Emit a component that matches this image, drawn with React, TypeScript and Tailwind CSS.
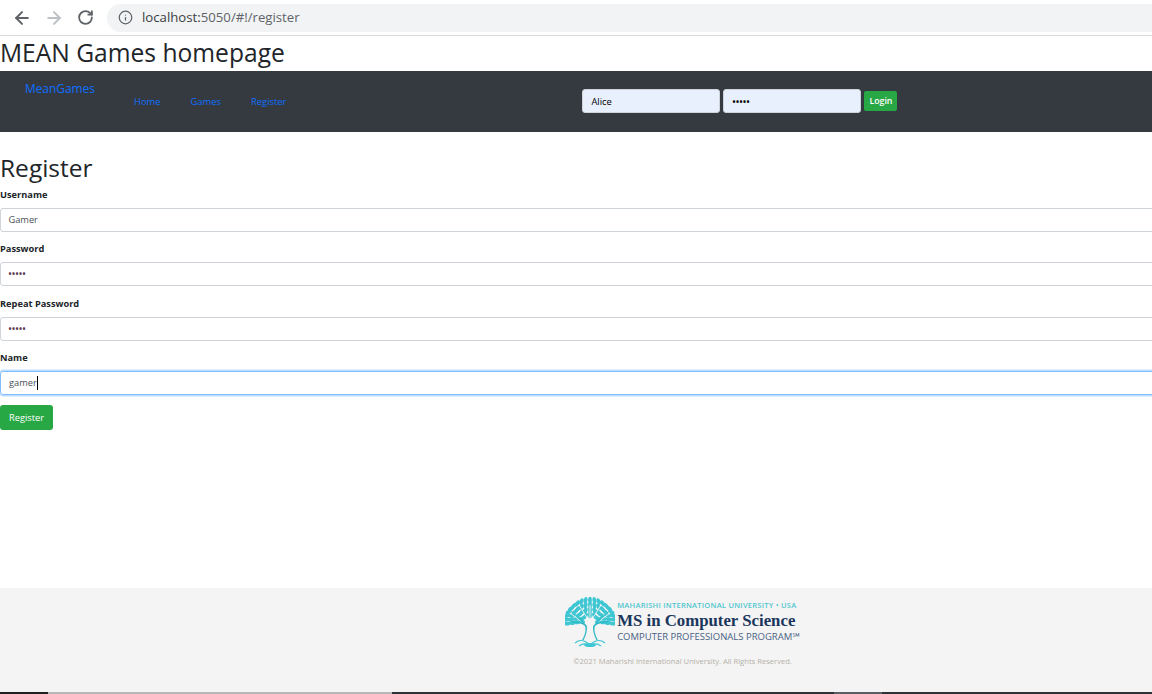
import { ArrowLeft, ArrowRight, RotateCw, Info } from "lucide-react";

const font = "font-['Open_Sans','Noto_Sans',sans-serif]";

function Field({ label, value, type = "text", focused = false }: { label: string; value: string; type?: string; focused?: boolean }) {
  return (
    <div className="mb-[9.6px]">
      <div className="h-[16px] text-[9.25px] leading-[16px] font-bold text-[#212529] mb-[4.9px]">{label}</div>
      <div
        className={
          focused
            ? "h-[24px] w-[1160px] rounded-[3px] border border-[#80bdff] shadow-[0_0_0_1.5px_#bfdeff] pl-[8px] flex items-center text-[9.25px] text-[#495057]"
            : "h-[24px] w-[1160px] rounded-[3px] border-[1.5px] border-[#ced4da] pl-[7.5px] flex items-center text-[9.25px] text-[#495057]"
        }
      >
        {type === "password" ? <span className="tracking-[0.5px] text-[8px] font-bold text-[#5a3a50]">•••••</span> : value}
        {focused && <span className="inline-block w-px h-[14px] bg-black" />}
      </div>
    </div>
  );
}

// leaves of the canopy: [cx, cy, angle]
const leaves: number[][] = [];
for (let ring = 0; ring < 4; ring++) {
  const rx = 23.5 - ring * 5;
  const ry = 21 - ring * 5;
  const count = 19 - ring * 4;
  for (let i = 0; i < count; i++) {
    const a = Math.PI * 1.08 * (i / (count - 1)) - Math.PI * 0.04;
    leaves.push([25 - rx * Math.cos(a), 24 - ry * Math.sin(a), 90 - (a * 180) / Math.PI]);
  }
}

function TreeLogo() {
  return (
    <svg width="50" height="52" viewBox="0 0 50 52" fill="none">
      <g fill="#3ec6d2">
        {leaves.map(([x, y, r], i) => (
          <ellipse key={i} cx={x} cy={y} rx="1.9" ry="3.4" transform={`rotate(${r} ${x} ${y})`} />
        ))}
      </g>
      <path d="M25 27 L25 8 M24 24 L14 8 M26 24 L36 8 M21 28 L5 16 M29 28 L45 16" stroke="#f4f4f4" strokeWidth="0.9" />
      <path
        d="M18 43 C21 37 22 33 21 29 C18 26 12 24 7 25 M21 29 L14 21 M32 43 C29 37 28 33 29 29 C32 26 38 24 43 25 M29 29 L36 21"
        stroke="#2fb9c6"
        strokeWidth="1.3"
      />
      <path d="M21 30 L29 30 L32 43 L18 43 Z" fill="#f4f4f4" />
      <path d="M18 43 C21 37 22 33 21 29 M32 43 C29 37 28 33 29 29" stroke="#2fb9c6" strokeWidth="1.3" />
      <path
        d="M10 46 C15 42 19 43 24 47 M40 46 C35 42 31 43 26 47 M14 49 C18 46 21 46 24 49 M36 49 C32 46 29 46 26 49"
        stroke="#3ec6d2"
        strokeWidth="1.2"
      />
      <ellipse cx="25" cy="48" rx="6" ry="2" fill="#3ec6d2" />
    </svg>
  );
}

export default function App() {
  return (
    <div className={`${font} w-[1152px] h-[694px] overflow-hidden bg-white flex flex-col text-[#212529]`}>
      {/* browser toolbar */}
      <div className="h-[36px] shrink-0 border-b border-[#dadce0] flex items-center">
        <ArrowLeft className="ml-[12px] w-[20px] h-[20px] text-[#5f6368]" strokeWidth={2.4} />
        <ArrowRight className="ml-[12px] w-[20px] h-[20px] text-[#bdc1c6]" strokeWidth={2.4} />
        <RotateCw className="ml-[13px] w-[17px] h-[17px] text-[#5f6368]" strokeWidth={2.6} />
        <div className="ml-[13px] flex-1 h-[28px] rounded-l-full bg-[#f1f3f4] flex items-center pl-[11px]">
          <Info className="w-[15px] h-[15px] text-[#5f6368]" strokeWidth={2} />
          <span className="ml-[9px] text-[13.2px] text-[#3c4043]">localhost:</span>
          <span className="text-[13.2px] text-[#5f6368]">5050/#!/register</span>
        </div>
      </div>

      <h1 className="h-[35px] shrink-0 text-[24.6px] leading-[33px] font-medium text-[#212529]">MEAN Games homepage</h1>

      {/* navbar */}
      <nav className="h-[61px] shrink-0 bg-[#343a40] flex items-start">
        <a className="ml-[25px] mt-[9px] text-[11.9px] leading-[17px] text-[#0f6fff] w-[109px]">MeanGames</a>
        <div className="mt-[24px] flex text-[9.4px] leading-[14px] text-[#0f6fff]">
          <a className="w-[56.5px]">Home</a>
          <a className="w-[60.5px]">Games</a>
          <a>Register</a>
        </div>
        <div className="ml-[296px] mt-[18px] flex items-center gap-[3px]">
          <div className="w-[138px] h-[24px] rounded-[3px] border border-[#ced4da] bg-[#e8f0fe] pl-2 pt-[2px] flex items-center text-[9.4px] text-black">Alice</div>
          <div className="w-[138px] h-[24px] rounded-[3px] border border-[#ced4da] bg-[#e8f0fe] pl-2 pt-[2px] flex items-center text-[8px] font-bold tracking-[0.5px] text-black">•••••</div>
          <button className="w-[33px] h-[20px] rounded-[2px] bg-[#28a745] text-white text-[8.8px] font-semibold leading-[20px]">Login</button>
        </div>
      </nav>

      {/* register form */}
      <main className="flex-1 pt-[19px]">
        <h2 className="h-[33px] text-[24.5px] leading-[33px] font-medium">Register</h2>
        <form className="mt-[3px]">
          <Field label="Username" value="Gamer" />
          <Field label="Password" value="" type="password" />
          <Field label="Repeat Password" value="" type="password" />
          <Field label="Name" value="gamer" focused />
          <button type="button" className="block w-[53px] h-[25px] rounded-[3px] bg-[#28a745] text-white text-[9.25px]">Register</button>
        </form>
      </main>

      {/* footer */}
      <footer className="h-[106px] shrink-0 bg-[#f4f4f4] flex flex-col">
        <div className="flex-1 flex flex-col items-center pl-[213px]">
          <div className="mt-[9px] flex">
            <TreeLogo />
            <div className="ml-[2px] flex flex-col">
              <span className="text-[7.5px] leading-[10px] mt-[3px] tracking-[0.26px] font-semibold text-[#4fc6cf] whitespace-nowrap">MAHARISHI INTERNATIONAL UNIVERSITY • USA</span>
              <span className="mt-[1px] font-['Liberation_Serif',serif] text-[16.8px] leading-[19px] font-bold text-[#1b365d] whitespace-nowrap">MS in Computer Science</span>
              <span className="text-[9.5px] leading-[13px] text-[#4a6285] whitespace-nowrap">COMPUTER PROFESSIONALS PROGRAM℠</span>
            </div>
          </div>
          <div className="mt-[6px] text-[7.6px] leading-[12px] text-[#b5b0a8]">©2021 Maharishi International University. All Rights Reserved.</div>
        </div>
        <div className="h-[2px] flex">
          <div className="w-[48px] bg-[#202020]" />
          <div className="w-[344px] bg-[#b8b8b8]" />
          <div className="w-[442px] bg-[#2b3338]" />
          <div className="w-[48px] bg-[#5a5f63]" />
          <div className="flex-1 bg-[#2b3338]" />
        </div>
      </footer>
    </div>
  );
}
